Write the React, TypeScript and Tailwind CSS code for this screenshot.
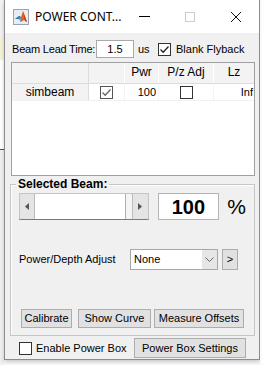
import { useState } from 'react';

const ui = "font-['Liberation_Sans',Arial,sans-serif] text-[11px] text-black";

function Check({ checked, muted }: { checked?: boolean; muted?: boolean }) {
  return (
    <div
      className={`w-[13px] h-[13px] bg-white border flex items-center justify-center shrink-0 ${
        muted ? 'border-[#555]' : 'border-[#333]'
      }`}
    >
      {checked && (
        <svg width="11" height="11" viewBox="0 0 11 11">
          <path d="M1.5 5.5 L4.2 8.2 L9.5 2.5" fill="none" stroke={muted ? '#666' : '#222'} strokeWidth="1.3" />
        </svg>
      )}
    </div>
  );
}

function Btn({ label, w, h = 19 }: { label: string; w: number; h?: number }) {
  return (
    <button
      className="bg-[#e1e1e1] border border-[#adadad] flex items-center justify-center shrink-0 text-[11px] leading-none whitespace-nowrap"
      style={{ width: w, height: h }}
    >
      {label}
    </button>
  );
}

function MatlabIcon() {
  return (
    <div className="w-[16px] h-[16px] border border-[#9aa4b0] bg-[#e8edf3] flex items-center justify-center">
      <svg width="14" height="14" viewBox="0 0 14 14">
        <path d="M1 9 L5 6 L7 7 L9 1 L13 12 L10 10 L7 12 L5 9 Z" fill="#e8641b" />
        <path d="M9 1 L13 12 L11 11 Z" fill="#c0301a" />
        <path d="M1 9 L5 6 L7 7 L5 9 Z" fill="#2a7ec2" />
        <path d="M5 9 L7 7 L7 12 Z" fill="#5aa6dd" />
      </svg>
    </div>
  );
}

export default function App() {
  const [flyback, setFlyback] = useState(true);

  return (
    <div className={`w-[262px] h-[365px] flex bg-[#fafafa] overflow-hidden ${ui}`}>
      {/* what shows of the window behind */}
      <div className="w-[4px] flex flex-col shrink-0">
        <div className="h-[38px] bg-[#f2f2f2]" />
        <div className="h-[22px] bg-[#f7f3d9]" />
        <div className="h-[80px] bg-white" />
        <div className="h-[10px] bg-white border-b border-[#3344ee]" />
        <div className="flex-1 bg-[#f0f0f0]" />
      </div>

      {/* Window */}
      <div className="w-[256px] h-[360px] shrink-0 flex flex-col border-x border-b border-[#8c8c8c] bg-[#f0f0f0] shadow-[0_2px_4px_rgba(0,0,0,0.2)]">
        {/* Title bar */}
        <div className="h-[33px] bg-white flex items-center shrink-0">
          <div className="ml-[8px]">
            <MatlabIcon />
          </div>
          <span className="ml-[6px] font-['Noto_Sans',sans-serif] text-[12px] text-black whitespace-nowrap">
            POWER CONT...
          </span>
          <div className="ml-auto flex h-full">
            <div className="w-[46px] flex items-center justify-center">
              <div className="w-[11px] h-px bg-black" />
            </div>
            <div className="w-[46px] flex items-center justify-center">
              <div className="w-[10px] h-[10px] border border-[#cccccc]" />
            </div>
            <div className="w-[46px] flex items-center justify-center">
              <svg width="12" height="12" viewBox="0 0 12 12">
                <path d="M1 1 L11 11 M11 1 L1 11" stroke="#111" strokeWidth="1" />
              </svg>
            </div>
          </div>
        </div>

        {/* Beam lead row */}
        <div className="flex items-center pl-[7px] pt-[7px] h-[25px] shrink-0">
          <span className="w-[82px] whitespace-nowrap tracking-[-0.2px]">Beam Lead Time:</span>
          <div className="ml-[2px] w-[38px] h-[18px] bg-white border border-[#a9a9a9] flex items-center justify-center">
            1.5
          </div>
          <span className="ml-[4px] w-[14px]">us</span>
          <div className="ml-[6px]" onClick={() => setFlyback(!flyback)}>
            <Check checked={flyback} />
          </div>
          <span className="ml-[5px] whitespace-nowrap">Blank Flyback</span>
        </div>

        {/* Beam table */}
        <div className="ml-[6px] mt-[4px] w-[244px] h-[114px] border border-[#a0a0a0] bg-white shrink-0">
          <div className="flex h-[21px] bg-[#f3f3f3] border-b border-[#dcdcdc]">
            <div className="w-[77px] border-r border-[#dcdcdc]" />
            <div className="w-[36px] border-r border-[#ffffff]" />
            <div className="w-[34px] border-r border-[#ffffff] flex items-end justify-center pb-[2px] text-[12px]">Pwr</div>
            <div className="w-[55px] border-r border-[#ffffff] flex items-end justify-center pb-[2px] text-[12px]">P/z Adj</div>
            <div className="w-[40px] flex items-end justify-center pb-[2px] text-[12px]">Lz</div>
          </div>
          <div className="flex h-[17px] border-b border-[#f0f0f0]">
            <div className="w-[77px] bg-[#f3f3f3] border-r border-[#dcdcdc] flex items-center justify-center text-[12px]">
              simbeam
            </div>
            <div className="w-[36px] border-r border-[#f3f3f3] flex items-center justify-center">
              <Check checked muted />
            </div>
            <div className="w-[34px] border-r border-[#f3f3f3] flex items-center justify-end pr-[2px]">100</div>
            <div className="w-[55px] border-r border-[#f3f3f3] flex items-center justify-center">
              <Check />
            </div>
            <div className="w-[40px] flex items-center justify-end pr-[1px]">Inf</div>
          </div>
        </div>

        {/* Selected beam group */}
        <div className="relative ml-[5px] mt-[8px] w-[245px] h-[152px] border border-[#c6c6c6] shadow-[inset_1px_1px_0_#ffffff] shrink-0 flex flex-col px-[8px] pt-[8px]">
          <span className="absolute -top-[8px] left-[5px] px-[2px] bg-[#f0f0f0] font-bold text-[12px] leading-[14px]">
            Selected Beam:
          </span>

          <div className="flex items-center h-[27px]">
            {/* slider */}
            <div className="w-[130px] h-[27px] flex border border-[#c4c4c4] border-b-[#7a7a7a] bg-[#f4f4f4]">
              <div className="w-[15px] bg-[#e4e4e4] border-r border-[#bcbcbc] flex items-center justify-center">
                <svg width="4" height="7" viewBox="0 0 4 7">
                  <path d="M4 0 L0 3.5 L4 7 Z" fill="#555" />
                </svg>
              </div>
              <div className="w-[91px] bg-white border-r border-[#b0b0b0]" />
              <div className="w-[6px]" />
              <div className="flex-1 bg-[#e4e4e4] border-l border-[#bcbcbc] flex items-center justify-center">
                <svg width="4" height="7" viewBox="0 0 4 7">
                  <path d="M0 0 L4 3.5 L0 7 Z" fill="#555" />
                </svg>
              </div>
            </div>
            <div className="ml-[9px] w-[62px] h-[27px] bg-white border border-[#b4b4b4] flex items-center justify-center font-bold text-[20px]">
              100
            </div>
            <span className="ml-[8px] text-[21px] leading-none">%</span>
          </div>

          <div className="flex items-center h-[21px] mt-[29px]">
            <span className="w-[111px] whitespace-nowrap">Power/Depth Adjust</span>
            <div className="w-[88px] h-[21px] bg-white border border-[#a8a8a8] flex items-center">
              <span className="flex-1 pl-[3px]">None</span>
              <div className="w-[15px] h-full bg-[#e6e6e6] flex items-center justify-center">
                <svg width="9" height="6" viewBox="0 0 9 6">
                  <path d="M0.5 0.5 L4.5 4.5 L8.5 0.5" fill="none" stroke="#666" strokeWidth="1" />
                </svg>
              </div>
            </div>
            <div className="ml-[4px] w-[16px] h-[21px] bg-[#e1e1e1] border border-[#adadad] flex items-center justify-center text-[11px]">
              &gt;
            </div>
          </div>

          <div className="flex items-center mt-[39px] ml-[2px]">
            <Btn label="Calibrate" w={51} />
            <div className="ml-[6px]">
              <Btn label="Show Curve" w={73} />
            </div>
            <div className="ml-[3px]">
              <Btn label="Measure Offsets" w={90} />
            </div>
          </div>
        </div>

        {/* Bottom row */}
        <div className="flex items-center mt-[1px] h-[22px] shrink-0">
          <div className="ml-[14px]">
            <Check />
          </div>
          <span className="ml-[4px] whitespace-nowrap">Enable Power Box</span>
          <div className="ml-auto mr-[13px]">
            <Btn label="Power Box Settings" w={112} h={20} />
          </div>
        </div>
      </div>

      <div className="w-[2px] bg-[#fafafa]" />
    </div>
  );
}
